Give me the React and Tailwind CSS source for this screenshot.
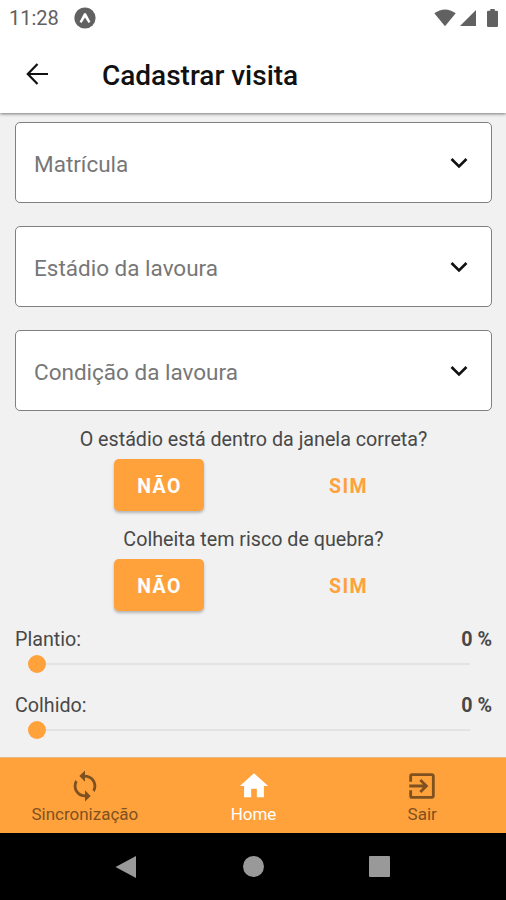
import React, { useState } from "react";
import { MdExitToApp, MdHome, MdSync } from "react-icons/md";

const fields = ["Matrícula", "Estádio da lavoura", "Condição da lavoura"];

const tabs = [
  { key: "sync", label: "Sincronização", Icon: MdSync },
  { key: "home", label: "Home", Icon: MdHome },
  { key: "exit", label: "Sair", Icon: MdExitToApp },
];

function StatusBar() {
  return (
    <div className="flex h-[35px] items-center pl-[9px] pr-2 text-[#616161]">
      <span className="w-[50px] whitespace-nowrap pt-0.5 text-[20px] leading-[35px]">
        11:28
      </span>
      <svg viewBox="0 0 22 22" className="ml-[15px] h-[22px] w-[22px]">
        <circle cx="11" cy="11" r="10.6" fill="currentColor" />
        <path
          d="M5.600 14.800 9.800 6.800q1.200-1.500 2.400 0l4.200 8-1.900 1.100-3.500-5.300-3.500 5.300z"
          fill="#fff"
        />
      </svg>
      <div className="ml-auto flex items-center">
        <svg viewBox="0 0 22 18" className="h-[18px] w-[22px]" fill="currentColor">
          <path d="M.3 4.2Q11-3.4 21.7 4.2L11 17.3z" />
        </svg>
        <svg viewBox="0 0 16 16" className="ml-1 h-4 w-4" fill="currentColor">
          <path d="M16 0v16H0z" />
        </svg>
        <svg viewBox="0 0 11 18" className="ml-[11px] h-[18px] w-[11px]" fill="currentColor">
          <path d="M3.3 0h4.4v1.8h2.1q1.2 0 1.2 1.2v13.8q0 1.2-1.2 1.2H1.2Q0 18 0 16.8V3q0-1.2 1.2-1.2h2.1z" />
        </svg>
      </div>
    </div>
  );
}

function Header() {
  return (
    <header className="z-10 h-[113px] shrink-0 bg-white shadow-[0_1px_3px_rgba(0,0,0,0.5)]">
      <StatusBar />
      <div className="flex h-[77px] items-center pl-[26px]">
        <button type="button" aria-label="Voltar">
          <svg
            viewBox="0 0 22 22"
            className="h-[22px] w-[22px]"
            fill="none"
            stroke="#111"
            strokeWidth="2.2"
          >
            <path d="M11.5 1 1.8 11l9.700 10M1.800 11H22" />
          </svg>
        </button>
        <h1 className="ml-[54px] pt-1 text-[28px] leading-8 font-medium tracking-[-0.01px] text-[#111]">
          Cadastrar visita
        </h1>
      </div>
    </header>
  );
}

function SelectField({ label }) {
  return (
    <button
      type="button"
      className="flex h-[81px] w-full items-center justify-between rounded-[5px] border-[1.5px] border-[#808080] bg-white pl-[18px] pr-[23px]"
    >
      <span className="pt-1 text-[22.5px] text-[#777]">{label}</span>
      <svg
        viewBox="0 0 18 12"
        className="h-3 w-[18px]"
        fill="none"
        stroke="#111"
        strokeWidth="2.6"
      >
        <path d="M1.5 2 9 9.5 16.5 2" />
      </svg>
    </button>
  );
}

function YesNo({ question }) {
  const [value, setValue] = useState(false);
  const base =
    "h-[52px] w-[90px] rounded-[5px] pt-[3px] pl-px text-[19.5px] font-bold tracking-[1.4px]";
  const active = "bg-[#ffa23c] text-white shadow-[0_2px_3px_rgba(0,0,0,0.25)]";
  const idle = "text-[#ffa23c]";

  return (
    <div className="h-[100px]">
      <p className="h-8 pt-px text-center text-[19.7px] leading-6 text-[#484848]">
        {question}
      </p>
      <div className="flex justify-evenly">
        <button
          type="button"
          onClick={() => setValue(false)}
          className={`${base} ${value ? idle : active}`}
        >
          NÃO
        </button>
        <button
          type="button"
          onClick={() => setValue(true)}
          className={`${base} ${value ? active : idle}`}
        >
          SIM
        </button>
      </div>
    </div>
  );
}

function PercentSlider({ label, value }) {
  return (
    <div className="h-[66px] text-[#484848]">
      <div className="flex h-7 justify-between pt-px text-[19.7px] leading-6">
        <span>{label}:</span>
        <span className="font-bold">{value} %</span>
      </div>
      <div className="flex h-[18px] items-center pl-[13px] pr-[22px]">
        <div className="h-[18px] w-[18px] rounded-full bg-[#ffa23c]" />
        <div className="h-0.5 flex-1 bg-[#e3e3e3]" />
      </div>
    </div>
  );
}

function TabBar() {
  const [current, setCurrent] = useState("home");

  return (
    <nav className="flex h-[76px] shrink-0 border-t border-[#e9b98a] bg-[#ffa23c]">
      {tabs.map(({ key, label, Icon }) => (
        <button
          key={key}
          type="button"
          onClick={() => setCurrent(key)}
          className={`flex flex-1 flex-col items-center pt-[11px] pl-px ${
            current === key ? "text-white" : "text-[#7f5120]"
          }`}
        >
          <Icon size={34} />
          <span className="-mt-px text-[17px] leading-6">{label}</span>
        </button>
      ))}
    </nav>
  );
}

function SystemBar() {
  return (
    <div className="flex h-[67px] shrink-0 items-center justify-center bg-black pr-0.5 text-[#999]">
      <svg viewBox="0 0 21 24" className="h-6 w-[21px]" fill="currentColor">
        <path d="M21 1v22L.5 12z" />
      </svg>
      <div className="ml-[107px] h-[21px] w-[21px] rounded-full bg-[#999]" />
      <div className="ml-[105px] h-[21px] w-[21px] rounded-[1px] bg-[#999]" />
    </div>
  );
}

export default function App() {
  return (
    <div className="flex h-[900px] w-[506px] flex-col overflow-hidden bg-[#f1f1f1] font-['Roboto',sans-serif]">
      <Header />
      <main className="min-h-0 flex-1 pl-[15px] pr-[14px] pt-[9px]">
        <div className="flex flex-col gap-[23px]">
          {fields.map((label) => (
            <SelectField key={label} label={label} />
          ))}
        </div>
        <div className="pt-4">
          <YesNo question="O estádio está dentro da janela correta?" />
          <YesNo question="Colheita tem risco de quebra?" />
          <PercentSlider label="Plantio" value={0} />
          <PercentSlider label="Colhido" value={0} />
        </div>
      </main>
      <TabBar />
      <SystemBar />
    </div>
  );
}
